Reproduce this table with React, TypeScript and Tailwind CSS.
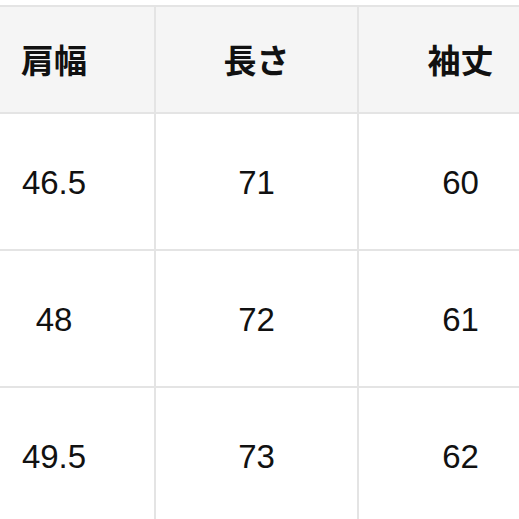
const headers = ['肩幅', '長さ', '袖丈'];
const rows = [
  ['46.5', '71', '60'],
  ['48', '72', '61'],
  ['49.5', '73', '62'],
];

export default function App() {
  return (
    <div className="w-[519px] h-[519px] overflow-hidden bg-white">
      <div
        className="w-[608px] ml-[-46px] mt-[5px] border-t-2 border-[#e4e4e4]"
        style={{ fontFamily: '"Liberation Sans", "Noto Sans CJK JP", sans-serif' }}
      >
        {/* header */}
        <div className="grid grid-cols-[202px_203px_203px] h-[107px] bg-[#f5f5f5] border-b-2 border-[#e4e4e4]">
          {headers.map((h, i) => (
            <div
              key={h}
              className={`flex items-center justify-center text-[33px] font-bold text-[#111] ${i < 2 ? 'border-r-2 border-[#e4e4e4]' : ''}`}
              style={{ fontFamily: '"Noto Sans CJK JP", sans-serif' }}
            >
              {h}
            </div>
          ))}
        </div>

        {/* body rows */}
        {rows.map((r, ri) => (
          <div
            key={ri}
            className="grid grid-cols-[202px_203px_203px] h-[137px] border-b-2 border-[#e4e4e4]"
          >
            {r.map((v, i) => (
              <div
                key={i}
                className={`flex items-center justify-center pt-[2px] text-[33px] text-[#111] ${i < 2 ? 'border-r-2 border-[#e4e4e4]' : ''}`}
              >
                {v}
              </div>
            ))}
          </div>
        ))}
      </div>
    </div>
  );
}
